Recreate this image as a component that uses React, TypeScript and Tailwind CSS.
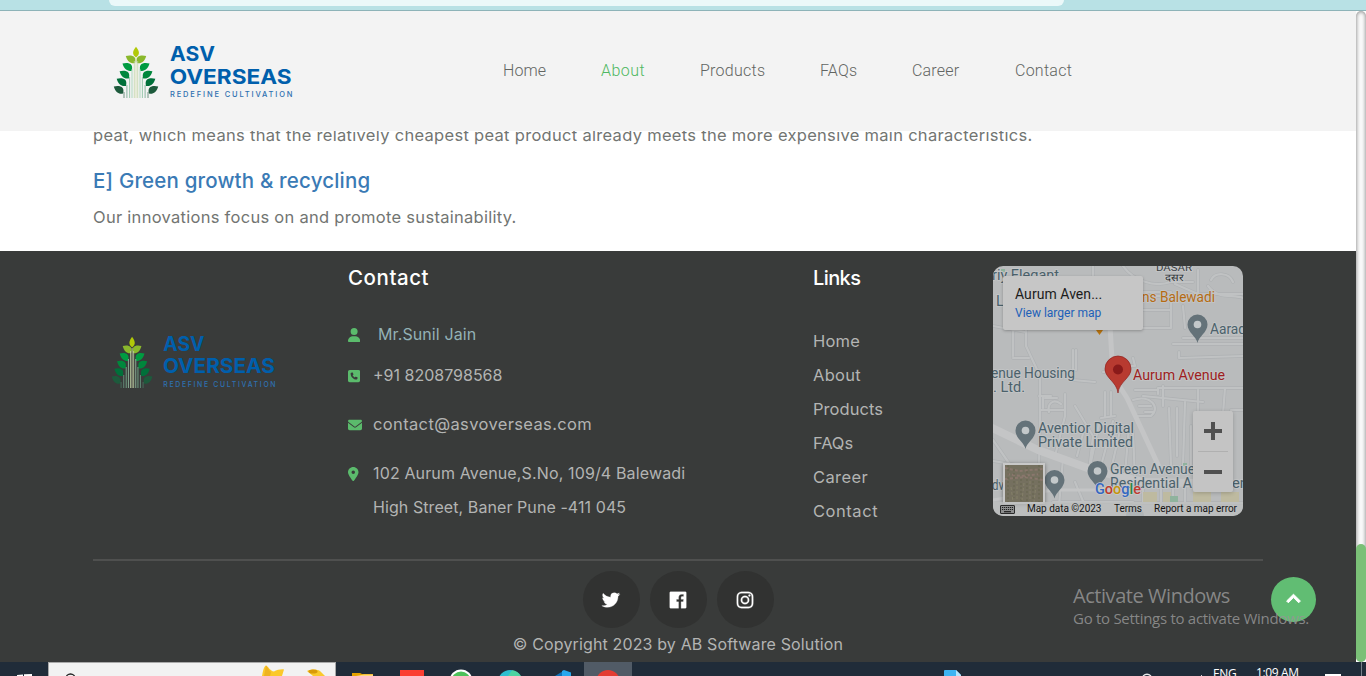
import type { ReactNode } from "react";
import { FaUser, FaSquarePhone, FaEnvelope, FaLocationDot } from "react-icons/fa6";
import { BiLogoTwitter, BiLogoFacebookSquare, BiLogoInstagram, BiChevronUp } from "react-icons/bi";

const leafRows = [
  { x: 13, y: 10.6, color: "#8ab82c" },
  { x: 9.7, y: 18.3, color: "#009b41" },
  { x: 6.8, y: 26, color: "#00873c" },
  { x: 3.9, y: 33.5, color: "#00703a" },
  { x: 1, y: 41.2, color: "#1d5a3c" },
];

const stems = [
  { x: 11, y: 47, color: "#4c7a63" },
  { x: 13.9, y: 40, color: "#6fa489" },
  { x: 16.6, y: 32, color: "#83bd9a" },
  { x: 19, y: 24, color: "#a0cfb0" },
  { x: 21.3, y: 16, color: "#c3d6a8" },
];

function Leaf({ x, y, color }: { x: number; y: number; color: string }) {
  return (
    <path
      d={`M${x - 0.2} ${y + 0.3}c3.400-.900 7.200-.700 8.900 1.500 1 1.600.9 3.800.3 5.600-4 .9-7.600-1.200-9.200-7.100z`}
      fill={color}
    />
  );
}

function LogoHalf() {
  return (
    <g>
      {leafRows.map((leaf) => (
        <Leaf key={leaf.y} {...leaf} />
      ))}
      {stems.map((s) => (
        <path key={s.x} d={`M${s.x} ${s.y}V53`} stroke={s.color} strokeWidth="0.8" />
      ))}
    </g>
  );
}

function Logo({ className }: { className: string }) {
  return (
    <svg viewBox="0 0 180 54" preserveAspectRatio="none" className={className} role="img">
      <path d="M23 1.800C19.200 6.500 19 9.500 23 12.400C27 9.500 26.800 6.500 23 1.800Z" fill="#b1c908" />
      <LogoHalf />
      <g transform="translate(46 0) scale(-1 1)">
        <LogoHalf />
      </g>
      <path d="M23 13V53" stroke="#d3dcae" strokeWidth="0.8" />
      <g fill="#005fac" className="font-['Inter',sans-serif]">
        <text x="57" y="16.200" fontSize="20.100" fontWeight="700" textLength="45" lengthAdjust="spacingAndGlyphs">ASV</text>
        <text x="56.700" y="38.500" fontSize="20.100" fontWeight="700" textLength="122" lengthAdjust="spacingAndGlyphs">OVERSEAS</text>
        <text x="57" y="52.300" fontSize="7.500" fontWeight="500" textLength="122.500" lengthAdjust="spacing" fill="#2e70b0">REDEFINE CULTIVATION</text>
      </g>
    </svg>
  );
}

function Pin({ x, y }: { x: number; y: number }) {
  return (
    <g transform={`translate(${x} ${y})`}>
      <path d="M0 18.500C-1 12-10 8-10 0A10 10 0 0 1 10 0C10 8 1 12 0 18.500Z" fill="#647279" />
      <circle r="3.800" fill="#c3c8ca" />
    </g>
  );
}

function Label({ x, y, w, color = "#4b616b", size = 14, children }: { x: number; y: number; w: number; color?: string; size?: number; children: ReactNode }) {
  return (
    <text
      x={x}
      y={y}
      fontSize={size}
      textLength={w}
      lengthAdjust="spacingAndGlyphs"
      fill={color}
      stroke="#c2c4c5"
      strokeWidth="2"
      strokeLinejoin="round"
      paintOrder="stroke"
      fontWeight="400"
    >
      {children}
    </text>
  );
}

const minorRoads = [
  "M80 26H178V62H140M130 0C140 14 160 22 178 16H200M178 30H140M178 44H150M182 18L205 28H250M205 28V4M218 14C222 6 236 6 240 16M215 20C225 34 240 28 250 32M190 40L192 62M100 0V10",
  "M33 62V80L47 110V150L46 200M47 144H72M72 128V150L62 190M80 84V114L102 116M20 90V30M58 130H46M36 92H20M0 60L33 66M83 84V104",
  "M130 100H142L140 92M186 86V92L250 90M180 78H250M190 72H250M142 124H165M150 130L210 136M170 120V140M132 106H110M166 122H250M232 122L230 148M250 144H238V180",
  "M165 122V128M192 136L190 200M205 124V150M176 142L178 200M184 142V190M198 160V200M214 150L216 200",
  "M52 132H64M50 142V130M56 146C54 138 60 132 68 138M112 126V150M118 126V150M108 152L122 150M140 134C158 128 168 142 158 150H144M146 140H158M152 146H160",
  "M82 140L100 170L96 205M92 160L84 190M106 158L98 196M120 155L108 200M128 160L118 204M136 160L132 208M140 165L142 215",
  "M0 195L30 200M70 192L66 240M82 216L92 240M150 222V236M168 222V236M180 222V236M192 222V236M140 237H250M60 236H140M0 174L18 200",
];

function MapCanvas() {
  return (
    <svg viewBox="0 0 250 250" className="absolute inset-0 h-[250px] w-[250px] font-['Roboto',sans-serif]">
      <rect width="250" height="250" fill="#b9bbbc" />
      <g fill="none" strokeLinecap="round" strokeLinejoin="round">
        {minorRoads.map((d) => (
          <path key={d} d={d} stroke="#aeb1b3" strokeWidth="3.400" />
        ))}
        {minorRoads.map((d) => (
          <path key={d} d={d} stroke="#c0c2c3" strokeWidth="2.200" />
        ))}
        <path d="M117 60L120 110L134 132L168 205" stroke="#c4c5c6" strokeWidth="5" />
        <path d="M-3 161L45 184L100 204L150 216L250 218" stroke="#c4c5c6" strokeWidth="8" />
        <path d="M0 234L60 224H140" stroke="#c4c5c6" strokeWidth="3" />
      </g>
      <path d="M150 226H164V236H150ZM170 226H178V236H170ZM200 226H218V236H200ZM228 226H246V236H228Z" fill="#bebaa0" />
      <path d="M177 230H185V236H177ZM190 197H194V200H190ZM8 3H12V6H8Z" fill="#8fb39d" />
      <circle cx="142" cy="250" r="9" fill="#84939a" />
      <Label x={-1} y={14} w={67}>riy Elegant</Label>
      <Label x={3} y={40} w={8}>L</Label>
      <Label x={163} y={4.5} w={36} size={9} color="#3d4245">DASAR</Label>
      <Label x={172} y={14.5} w={18} size={10} color="#2d3235">दसर</Label>
      <Label x={149} y={36} w={73} color="#b56b13">ns Balewadi</Label>
      <path d="M103 64H110L106.500 69Z" fill="#b97410" />
      <Pin x={204.5} y={58.5} />
      <Label x={217} y={68} w={36}>Aarad</Label>
      <Label x={-2} y={112} w={84}>enue Housing</Label>
      <Label x={0} y={126} w={32}>. Ltd.</Label>
      <Pin x={32.5} y={164.5} />
      <Label x={45} y={167} w={96}>Aventior Digital</Label>
      <Label x={45} y={181} w={95}>Private Limited</Label>
      <Pin x={104.5} y={205} />
      <Label x={117} y={208} w={85}>Green Avenue</Label>
      <Label x={117} y={222} w={82}>Residential A</Label>
      <Label x={239} y={222} w={16}>en</Label>
      <Pin x={61.5} y={214} />
      <Label x={-1} y={224} w={12}>dv</Label>
      <path d="M125 127C124 116 112 112 112 103A13 13 0 0 1 138 103C138 112 126 116 125 127Z" fill="#b83a30" stroke="#8f1f1c" strokeWidth="0.700" />
      <circle cx="125" cy="103.500" r="5" fill="#8a1a1a" />
      <Label x={140} y={114} w={92} color="#9e1e22">Aurum Avenue</Label>
      <text x="102" y="228" fontSize="15.500" textLength="46" lengthAdjust="spacingAndGlyphs" fontWeight="500" stroke="#cacaca" strokeWidth="1.500" paintOrder="stroke">
        <tspan fill="#3568c2">G</tspan>
        <tspan fill="#bd3a30">o</tspan>
        <tspan fill="#c4940c">o</tspan>
        <tspan fill="#3568c2">g</tspan>
        <tspan fill="#2b8545">l</tspan>
        <tspan fill="#bd3a30">e</tspan>
      </text>
    </svg>
  );
}

function MapKeyboard() {
  return (
    <svg viewBox="0 0 15 9" className="h-[9px] w-[15px]">
      <rect x="0.500" y="0.500" width="14" height="8" rx="0.500" fill="#8d8e8e" stroke="#2b2b2b" />
      <path d="M2 2.500H13M2 4.500H13" stroke="#1f1f1f" strokeWidth="1.200" strokeDasharray="1.200 0.800" />
      <path d="M4 6.700H11" stroke="#1f1f1f" strokeWidth="1.200" />
    </svg>
  );
}

function MapCard() {
  return (
    <div className="relative h-[250px] w-[250px] overflow-hidden rounded-[10px] font-['Roboto',sans-serif]">
      <MapCanvas />
      <div className="absolute left-[10px] top-[10px] h-[54px] w-[140px] rounded-[2px] bg-[#c6c6c6] pl-[12px] pt-[10px] shadow-[0_1px_3px_rgba(0,0,0,0.25)]">
        <div className="text-[14px] leading-[17px] tracking-[0.05px] text-[#1c1c1c]">Aurum Aven...</div>
        <div className="mt-[2px] text-[12px] leading-[16px] text-[#2160b8]">View larger map</div>
      </div>
      <div className="absolute left-[200px] top-[145px] h-[81px] w-[40px] rounded-[2px] bg-[#c4c4c4] shadow-[0_1px_4px_rgba(0,0,0,0.2)]">
        <svg viewBox="0 0 40 81" className="h-[81px] w-[40px]">
          <path d="M11 20H29M20 11V29M11 61H29" stroke="#505050" strokeWidth="4" />
          <path d="M5 40.500H35" stroke="#b0b0b0" strokeWidth="1" />
        </svg>
      </div>
      <div className="absolute left-[10px] top-[197px] h-[41px] w-[42px] border-2 border-[#c8c8c8] bg-[#75705f] shadow-[0_1px_4px_rgba(0,0,0,0.4)]">
        <svg viewBox="0 0 38 37" className="h-full w-full">
          <path d="M0 3L14 6L38 4M2 9L16 11L36 9M0 14L20 12L38 15" stroke="#8a776d" strokeWidth="2" strokeDasharray="3 2" fill="none" />
          <path d="M3 0V37M9 4V33M16 14V37M22 2V36M28 12V34M34 0V37" stroke="#66654f" strokeWidth="1" strokeDasharray="2 2" />
          <path d="M6 22L8 37M19 18L17 35M31 20L29 37M12 16V34M25 16V37" stroke="#858069" strokeWidth="1" strokeDasharray="3 2" />
        </svg>
      </div>
      <div className="absolute bottom-0 left-0 flex h-[14px] w-full items-center bg-[#bebfbf]/75 pl-[7px] text-[10px] leading-[14px] text-[#141414]">
        <MapKeyboard />
        <span className="ml-[12px] w-[87px] whitespace-nowrap tracking-[-0.03px]">Map data ©2023</span>
        <span className="w-[40px] tracking-[-0.05px]">Terms</span>
        <span className="whitespace-nowrap tracking-[-0.03px]">Report a map error</span>
      </div>
    </div>
  );
}

const navItems = [
  { label: "Home", style: "w-[98px] text-[#626562] tracking-[0.1px]" },
  { label: "About", style: "w-[99px] text-[#4fb862] tracking-[0.45px]" },
  { label: "Products", style: "w-[120px] text-[#626562] tracking-[0.25px]" },
  { label: "FAQs", style: "w-[92px] text-[#626562] tracking-[0.2px]" },
  { label: "Career", style: "w-[103px] text-[#626562] tracking-[0.2px]" },
  { label: "Contact", style: "text-[#626562] tracking-[0.25px]" },
];

function Header() {
  return (
    <header className="flex h-[120px] shrink-0 bg-[#f3f3f3] pl-[113px]">
      <Logo className="mt-[34px] h-[54px] w-[180px]" />
      <nav className="ml-[210px] mt-[47px] flex font-['Roboto',sans-serif] text-[16px] font-light leading-[26px]">
        {navItems.map((item) => (
          <a key={item.label} className={item.style}>
            {item.label}
          </a>
        ))}
      </nav>
    </header>
  );
}

function Article() {
  return (
    <section className="h-[120px] shrink-0 overflow-hidden bg-white pl-[93px] text-[16.5px] text-[#727572]">
      <p className="-mt-[9px] h-[27px] whitespace-nowrap leading-[27px] tracking-[0.3px]">
        peat, which means that the relatively cheapest peat product already meets the more expensive main characteristics.
      </p>
      <h2 className="mt-[20px] whitespace-nowrap text-[20.5px] font-medium leading-[24px] tracking-[0.17px] text-[#3a7ab5]">
        E] Green growth &amp; recycling
      </h2>
      <p className="mt-[11px] leading-[27px] tracking-[0.28px]">Our innovations focus on and promote sustainability.</p>
    </section>
  );
}

const links = [
  { label: "Home", style: "tracking-[0.2px]" },
  { label: "About", style: "tracking-[0.3px]" },
  { label: "Products", style: "tracking-[0.05px]" },
  { label: "FAQs", style: "tracking-[-0.1px]" },
  { label: "Career", style: "tracking-[0.4px]" },
  { label: "Contact", style: "tracking-[0.55px]" },
];

const socials = [
  { name: "twitter", Icon: BiLogoTwitter },
  { name: "facebook", Icon: BiLogoFacebookSquare },
  { name: "instagram", Icon: BiLogoInstagram },
];

function ContactRow({ icon, className, children }: { icon: ReactNode; className: string; children: ReactNode }) {
  return (
    <div className={`flex whitespace-nowrap leading-[34px] ${className}`}>
      <span className="flex h-[36px] w-[25px] shrink-0 items-center text-[#5bbb6c]">{icon}</span>
      <div>{children}</div>
    </div>
  );
}

function Footer() {
  return (
    <footer className="flex h-[411px] shrink-0 flex-col bg-[#393b3a] text-[16px] text-[#b3b4b3]">
      <div className="flex h-[308px] pl-[111px] pt-[15px]">
        <div className="w-[237px]">
          <Logo className="mt-[69px] h-[54px] w-[165px]" />
        </div>
        <div className="w-[465px]">
          <h3 className="text-[20.5px] font-medium leading-[24px] tracking-[0.55px] text-white">Contact</h3>
          <ContactRow className="mt-[27px] h-[34px]" icon={<FaUser className="h-[14px] w-[12.25px]" />}>
            <span className="pl-[5px] tracking-[0.1px] text-[#93b1b5]">Mr.Sunil Jain</span>
          </ContactRow>
          <ContactRow className="mt-[7px] h-[34px]" icon={<FaSquarePhone className="h-[14px] w-[12.25px]" />}>
            +91 8208798568
          </ContactRow>
          <ContactRow className="mt-[15px] h-[34px]" icon={<FaEnvelope className="h-[14px] w-[14px]" />}>
            <span className="text-[16.5px] tracking-[0.36px]">contact@asvoverseas.com</span>
          </ContactRow>
          <ContactRow className="mt-[15px]" icon={<FaLocationDot className="h-[14px] w-[10.5px]" />}>
            <span className="block tracking-[0.14px]">102 Aurum Avenue,S.No, 109/4 Balewadi</span>
            <span className="block tracking-[0.08px]">High Street, Baner Pune -411 045</span>
          </ContactRow>
        </div>
        <div className="w-[180px]">
          <h3 className="text-[20px] font-medium leading-[24px] tracking-[-0.6px] text-white">Links</h3>
          <ul className="mt-[34px] text-[16.5px] leading-[34px]">
            {links.map((link) => (
              <li key={link.label} className={link.style}>
                {link.label}
              </li>
            ))}
          </ul>
        </div>
        <MapCard />
      </div>
      <div className="mx-[93px] h-[2px] bg-[#4f504f]" />
      <div className="mt-[10px] flex justify-center gap-[10px]">
        {socials.map(({ name, Icon }) => (
          <span key={name} className="flex h-[57px] w-[57px] items-center justify-center rounded-full bg-[#313231] pt-px text-white">
            <Icon className="h-[22px] w-[22px]" stroke="currentColor" strokeWidth="0.3" />
          </span>
        ))}
      </div>
      <p className="mt-[3px] text-center leading-[27px] tracking-[0.14px]">© Copyright 2023 by AB Software Solution</p>
    </footer>
  );
}

function Taskbar() {
  return (
    <div className="flex h-[14px] shrink-0 overflow-hidden bg-[#202c39] font-['Open_Sans',sans-serif] text-[12px] text-white">
      <svg viewBox="0 0 48 14" className="h-[14px] w-[48px] shrink-0">
        <path d="M17 13L23 12.500V14H17ZM24 12.300L32 12V14H24Z" fill="#fff" />
      </svg>
      <div className="h-[20px] w-[288px] shrink-0 border border-[#a9a9a9] bg-[#f2f2f2]">
        <svg viewBox="0 0 286 13" className="h-[13px] w-[286px]">
          <circle cx="21.500" cy="15.500" r="4.500" fill="none" stroke="#222" strokeWidth="1.300" />
          <path d="M213 13C214 8 215 3 217 2.500C220 4 221 8 225 8.500C228 7 232 6 235 6.500L233 13Z" fill="#fbc92b" />
          <path d="M217 2.500C219 4 220 8 222 9L221 13H215Z" fill="#eeb321" />
          <path d="M258 8C262 6 268 6 271 8L276 13H264Z" fill="#fac92d" />
          <ellipse cx="264" cy="8.500" rx="4.500" ry="2" fill="#d99a08" />
        </svg>
      </div>
      <svg viewBox="0 0 248 14" className="h-[14px] w-[248px] shrink-0">
        <path d="M16 11H24L26 12H37V14H16Z" fill="#e6a200" />
        <path d="M28 12.500H37V14H20Z" fill="#ffd977" />
        <path d="M64 8H88V14H64Z" fill="#fb3e31" />
        <circle cx="125" cy="19" r="11.500" fill="#fff" />
        <circle cx="125" cy="19" r="9.500" fill="#4dc15a" />
        <circle cx="174" cy="20" r="12" fill="#2dbfd0" />
        <path d="M176 8.200A12 12 0 0 1 185 14H172Z" fill="#4dd3a1" />
        <path d="M219 14L228 8.500V14Z" fill="#0d72b9" />
        <path d="M228 8L235 10.500V14H226V9Z" fill="#28a8ee" />
      </svg>
      <div className="flex w-[48px] shrink-0 justify-center bg-[#515b66]">
        <div className="mt-[8px] h-[24px] w-[24px] shrink-0 rounded-full bg-[#e43c32]" />
      </div>
      <svg viewBox="0 0 581 14" className="h-[14px] w-[581px] shrink-0">
        <path d="M312 8.500Q312 8 313 8H324L329 13V14H312Z" fill="#3db4f2" />
        <path d="M324 8V14H329V13Z" fill="#b7e4fb" />
        <path d="M511 14Q515 10.500 519 14" fill="none" stroke="#e7e9eb" strokeWidth="1.300" />
        <path d="M569 13H570V14H569Z" fill="#ccd0d4" />
      </svg>
      <span className="mt-[5px] w-[43px] shrink-0 leading-[14px] tracking-[-0.3px]">ENG</span>
      <span className="mt-[4px] w-[69px] shrink-0 whitespace-nowrap leading-[14px] tracking-[-0.35px]">1:09 AM</span>
      <span className="mt-[12px] h-[8px] w-[16px] shrink-0 bg-white" />
      <span className="ml-[20px] h-[14px] w-px shrink-0 bg-[#77808a]" />
    </div>
  );
}

export default function App() {
  return (
    <div className="relative flex h-[676px] w-[1366px] flex-col overflow-hidden bg-white font-['Inter',sans-serif]">
      <div className="h-[11px] shrink-0 border-b border-[#8db3b8] bg-[#b8e1e5] pl-[109px]">
        <div className="h-[6px] w-[955px] rounded-b-[14px] bg-[#ebf8f9]" />
      </div>
      <div className="flex h-[651px] shrink-0">
        <main className="flex w-[1356px] shrink-0 flex-col">
          <Header />
          <Article />
          <Footer />
        </main>
        <div className="flex w-[10px] flex-col justify-end rounded-[5px] bg-[#fafafa] shadow-[inset_0_0_4px_rgba(0,0,0,0.55)]">
          <div className="h-[118px] rounded-[5px] bg-[#7bc077]" />
        </div>
      </div>
      <Taskbar />
      <button className="absolute left-[1271px] top-[577px] flex h-[45px] w-[45px] items-center justify-center rounded-full bg-[#61bd73] text-white">
        <BiChevronUp className="h-[29px] w-[29px]" strokeWidth="0.8" stroke="currentColor" />
      </button>
      <div className="absolute left-[1073px] top-[584px] whitespace-nowrap font-['Open_Sans',sans-serif] text-[#969696]/85">
        <div className="text-[20px] leading-[24px] tracking-[-0.45px]">Activate Windows</div>
        <div className="text-[15px] leading-[20px] tracking-[-0.28px]">Go to Settings to activate Windows.</div>
      </div>
    </div>
  );
}
